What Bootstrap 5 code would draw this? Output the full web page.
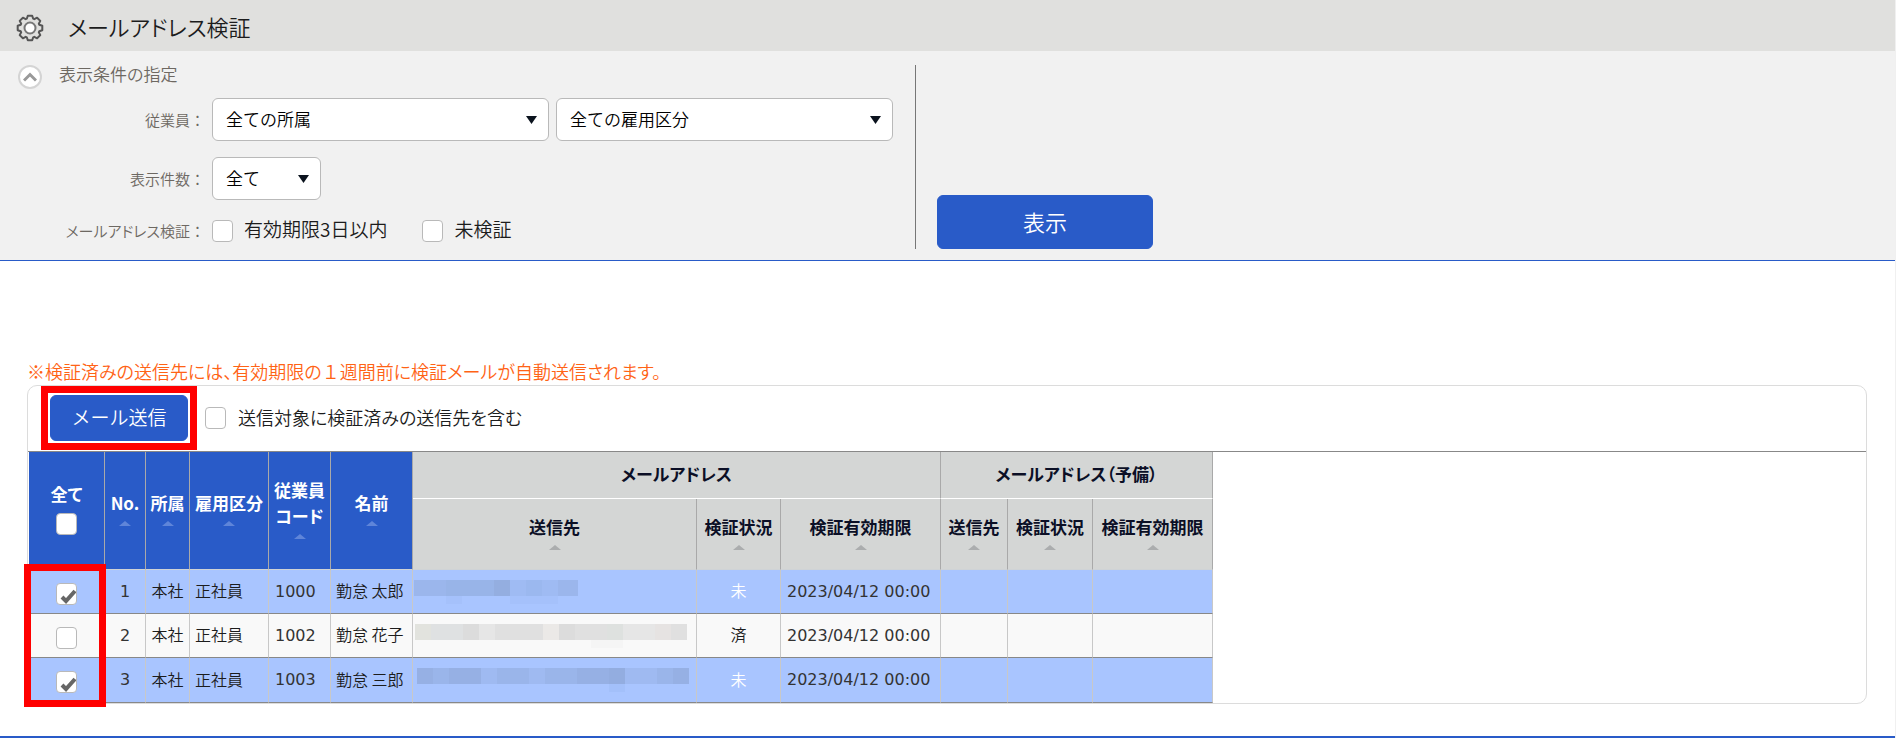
<!DOCTYPE html>
<html lang="ja">
<head>
<meta charset="utf-8">
<meta name="viewport" content="width=device-width, initial-scale=1">
<title>メールアドレス検証</title>
<link href="https://cdn.jsdelivr.net/npm/bootstrap@5.3.0/dist/css/bootstrap.min.css" rel="stylesheet">
<style>
  :root { --brand: #295bc8; --ink: #1c1c1c; }
  body {
    font-family: "Noto Sans CJK JP", "Noto Sans", sans-serif;
    font-feature-settings: "palt";
    font-size: 16px; line-height: 24px; font-weight: 350; color: var(--ink);
    border-right: 1px solid #f0f0f0;
  }
  .title-bar { background: #e0e0de; height: 51px; padding: 4px 16px 0 16px; gap: 24px; }
  .title-bar h1 { font-size: 22px; line-height: 32px; font-weight: 350; padding-bottom: 3px; }
  .filter-panel { background: #f1f1f1; border-bottom: 1px solid var(--brand); padding: 14px 0 11px; }
  .filter-form { flex: 0 1 916px; border-right: 1px solid #777; padding-bottom: 6px; }
  .filter-head { padding-left: 18px; gap: 17px; height: 23px; margin-bottom: 10px; font-size: 17px; line-height: 18px; color: #6d6862; }
  .filter-name { width: 205px; text-align: right; font-size: 15px; color: #6d6862; flex: none; }
  .colon { font-feature-settings: normal; }
  .filter-line { gap: 7px; }
  .tall-line { height: 43px; margin-bottom: 16px; }
  .check-line { height: 24px; margin-top: 19px; }
  .check-line .check-text { padding-bottom: 4px; }
  .check-gap { margin-right: 28px; }
  .toggle-btn { width: 24px; height: 24px; border: 2px solid #d4d4d4; border-radius: 50%; background: #fff; padding: 0; display: flex; align-items: center; justify-content: center; }
  .form-select {
    height: 43px; padding: 0 30px 1px 13px; font-size: 17px; font-weight: 350; color: #000;
    border: 1px solid #b9b9b9; border-radius: 6px;
    background-image: url("data:image/svg+xml,%3Csvg xmlns='http://www.w3.org/2000/svg' viewBox='0 0 11 8'%3E%3Cpath d='M0 0h11L5.500 8z' fill='%230b131e'/%3E%3C/svg%3E");
    background-size: 11px 8px; background-position: right 11px center;
  }
  .select-wide { width: 337px; }
  .select-short { width: 109px; }
  .form-check-input {
    width: 21px; height: 22px; margin: 0; flex: none; float: none;
    border: 1px solid #b9b9b9; border-radius: 3px; background-color: #fff;
  }
  .form-check-input:checked {
    background-color: #fff; border-color: #b9b9b9; background-size: 17px 15px; background-position: 3px 5px;
    background-image: url("data:image/svg+xml,%3Csvg xmlns='http://www.w3.org/2000/svg' viewBox='0 0 17 15'%3E%3Cpath d='M2 8l4 4L15 2' fill='none' stroke='%23666' stroke-width='4'/%3E%3C/svg%3E");
  }
  .check-text { font-size: 19px; line-height: 24px; }
  .btn-brand { --bs-btn-color: #fff; --bs-btn-bg: var(--brand); --bs-btn-border-color: var(--brand); --bs-btn-hover-color: #fff; --bs-btn-hover-bg: #1f4cae; font-size: 19px; font-weight: 350; line-height: 24px; border-radius: 6px; padding: 0 0 3px; }
  .btn-show { width: 216px; height: 54px; margin-left: 21px; font-size: 22px; }
  .btn-send { width: 138px; height: 46px; }
  .results { padding: 98px 28px 0 27px; }
  .notice { color: #ff6315; font-size: 18px; line-height: 24px; padding-bottom: 2px; }
  .result-box { border: 1px solid #dcdcdc; border-radius: 10px; }
  .send-bar { height: 66px; border-bottom: 1px solid #888; padding: 0 0 1px 13px; }
  .send-bar .check-text { font-size: 18px; padding-bottom: 2px; }
  .marked { border: 7px solid #f00; padding: 2px; }
  .grid-wrap { position: relative; padding-left: 1px; }
  .row-mark { position: absolute; left: -4px; top: 112px; width: 82px; height: 143px; border: 7px solid #f00; pointer-events: none; }
  .mail-grid { table-layout: fixed; width: 1184px; border-collapse: separate; border-spacing: 0; }
  .mail-grid > thead > tr > th {
    background: #d4d6d5; color: #0b0f26; box-shadow: none; border: 0 solid #a9a9a9; border-right-width: 1px;
    padding: 0 0 6px; font-size: 17px; line-height: 26px; text-align: center; vertical-align: middle; white-space: nowrap; font-weight: 700;
  }
  .mail-grid > thead > tr > th.main-col { background: var(--brand); color: #fff; border-bottom: 1px solid #cfd3d6; }
  .mail-grid > thead > tr > th.group-col { height: 47px; border-bottom: 1px solid #fff; padding-bottom: 2px; }
  .mail-grid > thead > tr > th.sub-col { height: 71px; border-bottom: 1px solid #cfd3d6; padding-bottom: 4px; }
  .sort { display: block; width: 0; margin: 5px auto 0; border: solid transparent; border-width: 0 6px 5px; border-bottom-color: #abadae; }
  .main-col .sort { border-bottom-color: #5f85d9; }
  .all-label { margin-bottom: 6px; }
  .mail-grid > tbody > tr > td {
    height: 44px; padding: 0 5px 3px; box-shadow: none; background: #f9f9f9; color: var(--ink); vertical-align: middle; white-space: nowrap;
    border: 0 solid #c8c8c8; border-right-width: 1px; border-bottom: 1px solid #888;
  }
  .mail-grid > tbody > tr:last-child > td { height: 45px; }
  .mail-grid > tbody > tr > td.tick { padding-bottom: 0; padding-top: 4px; }
  .mail-grid > tbody > tr.picked > td { background: #a9c5ff; }
  .mail-grid > tbody > tr.picked > td.unverified { color: #fff; }
  .mail-grid > tbody > tr > td.num { font-family: "DejaVu Sans", sans-serif; font-weight: 400; color: #333; padding: 0 6px; }
  .mosaic { display: block; }
  .page-end { border-top: 2px solid var(--brand); }
</style>
<script src="https://cdn.jsdelivr.net/npm/bootstrap@5.3.0/dist/js/bootstrap.bundle.min.js"></script>
</head>
<body class="d-flex flex-column min-vh-100">

<header class="title-bar d-flex align-items-center">
  <svg width="28" height="28" viewBox="-14 -14 28 28" fill="none" stroke="#555" stroke-width="2" stroke-linejoin="round" aria-hidden="true">
    <path d="M-3.200-9.300L-2.200-12.300H2.200L3.200-9.300L4.300-8.800L7.100-10.300L10.300-7.100L8.800-4.300L9.300-3.200L12.300-2.200V2.200L9.300 3.200L8.800 4.300L10.300 7.100L7.100 10.300L4.300 8.800L3.200 9.300L2.200 12.300H-2.200L-3.200 9.300L-4.300 8.800L-7.100 10.300L-10.300 7.100L-8.800 4.300L-9.300 3.200L-12.300 2.200V-2.200L-9.300-3.200L-8.800-4.300L-10.300-7.100L-7.100-10.300L-4.300-8.800Z"/>
    <circle r="5.500" fill="#fff" stroke="#777"/>
  </svg>
  <h1 class="m-0">メールアドレス検証</h1>
</header>

<form class="filter-panel d-flex align-items-end">
  <div class="filter-form">
    <div class="filter-head d-flex align-items-start">
      <button type="button" class="toggle-btn" aria-label="折りたたむ">
        <svg width="14" height="10" viewBox="0 0 14 10" fill="none" stroke="#999" stroke-width="3"><path d="M1 8.500L7 2.500L13 8.500"/></svg>
      </button>
      <span>表示条件の指定</span>
    </div>
    <div class="filter-line tall-line d-flex align-items-center">
      <label class="filter-name" for="dept">従業員<span class="colon">：</span></label>
      <select id="dept" class="form-select select-wide"><option>全ての所属</option></select>
      <select id="kind" class="form-select select-wide" aria-label="雇用区分"><option>全ての雇用区分</option></select>
    </div>
    <div class="filter-line tall-line d-flex align-items-center">
      <label class="filter-name" for="count">表示件数<span class="colon">：</span></label>
      <select id="count" class="form-select select-short"><option>全て</option></select>
    </div>
    <div class="filter-line check-line d-flex align-items-center">
      <span class="filter-name">メールアドレス検証<span class="colon">：</span></span>
      <input class="form-check-input" type="checkbox" id="soon">
      <label class="check-text check-gap ms-1" for="soon">有効期限3日以内</label>
      <input class="form-check-input" type="checkbox" id="yet">
      <label class="check-text ms-1" for="yet">未検証</label>
    </div>
  </div>
  <button type="button" class="btn btn-brand btn-show">表示</button>
</form>

<main class="results">
  <p class="notice m-0">※検証済みの送信先には、有効期限の<span class="colon">１</span>週間前に検証メールが自動送信されます。</p>
  <section class="result-box">
    <div class="send-bar d-flex align-items-center">
      <div class="marked"><button type="button" class="btn btn-brand btn-send d-block">メール送信</button></div>
      <input class="form-check-input ms-2" type="checkbox" id="incl">
      <label class="check-text ms-2 ps-1" for="incl">送信対象に検証済みの送信先を含む</label>
    </div>
    <div class="grid-wrap">
      <table class="table mail-grid m-0">
        <colgroup>
          <col style="width:76px"><col style="width:41px"><col style="width:44px"><col style="width:79px"><col style="width:62px"><col style="width:82px">
          <col style="width:284px"><col style="width:84px"><col style="width:160px"><col style="width:67px"><col style="width:85px"><col style="width:120px">
        </colgroup>
        <thead>
          <tr>
            <th class="main-col" rowspan="2"><label class="all-label d-block" for="all">全て</label><input class="form-check-input d-block mx-auto" type="checkbox" id="all"></th>
            <th class="main-col" rowspan="2">No.<i class="sort"></i></th>
            <th class="main-col" rowspan="2">所属<i class="sort"></i></th>
            <th class="main-col" rowspan="2">雇用区分<i class="sort"></i></th>
            <th class="main-col" rowspan="2">従業員<br>コード<i class="sort"></i></th>
            <th class="main-col" rowspan="2">名前<i class="sort"></i></th>
            <th class="group-col" colspan="3">メールアドレス</th>
            <th class="group-col" colspan="3">メールアドレス（予備）</th>
          </tr>
          <tr>
            <th class="sub-col">送信先<i class="sort"></i></th>
            <th class="sub-col">検証状況<i class="sort"></i></th>
            <th class="sub-col">検証有効期限<i class="sort"></i></th>
            <th class="sub-col">送信先<i class="sort"></i></th>
            <th class="sub-col">検証状況<i class="sort"></i></th>
            <th class="sub-col">検証有効期限<i class="sort"></i></th>
          </tr>
        </thead>
        <tbody>
          <tr class="picked">
            <td class="tick"><input class="form-check-input d-block mx-auto" type="checkbox" checked aria-label="1行目を選択"></td>
            <td class="num text-center">1</td><td class="text-center">本社</td><td>正社員</td><td class="num">1000</td><td>勤怠 太郎</td>
            <td class="p-0"><svg class="mosaic" width="180" height="24" aria-hidden="true">
              <path fill="#9bb6ec" d="M1 0h164v16H1z"/><path fill="#98b4e8" d="M33 0h48v16H33z"/><path fill="#94aee0" d="M81 0h16v16H81z"/><path fill="#9fbbf3" d="M97 0h16v16H97zM129 0h16v16h-16z"/><path fill="#9bb8ef" d="M113 0h16v16h-16z"/><path fill="#a5c1fb" d="M33 16h16v8H33zM97 16h48v8H97z"/>
            </svg></td>
            <td class="text-center unverified">未</td><td class="num">2023/04/12 00:00</td><td></td><td></td><td></td>
          </tr>
          <tr>
            <td class="tick"><input class="form-check-input d-block mx-auto" type="checkbox" aria-label="2行目を選択"></td>
            <td class="num text-center">2</td><td class="text-center">本社</td><td>正社員</td><td class="num">1002</td><td>勤怠 花子</td>
            <td class="p-0"><svg class="mosaic" width="280" height="24" aria-hidden="true">
              <path fill="#e0e0e0" d="M2 0h272v16H2z"/><path fill="#e2e3de" d="M2 0h16v16H2z"/><path fill="#dfe1e2" d="M18 0h32v16H18z"/><path fill="#dcdcdc" d="M50 0h16v16H50zM146 0h16v16h-16z"/><path fill="#e6e6e6" d="M66 0h16v16H66zM210 0h32v16h-32z"/><path fill="#ebe9e7" d="M130 0h16v16h-16z"/><path fill="#dee1df" d="M194 0h16v16h-16z"/><path fill="#e6e3e2" d="M242 0h16v16h-16z"/><path fill="#f5f5f5" d="M178 16h32v8h-32z"/>
            </svg></td>
            <td class="text-center">済</td><td class="num">2023/04/12 00:00</td><td></td><td></td><td></td>
          </tr>
          <tr class="picked">
            <td class="tick"><input class="form-check-input d-block mx-auto" type="checkbox" checked aria-label="3行目を選択"></td>
            <td class="num text-center">3</td><td class="text-center">本社</td><td>正社員</td><td class="num">1003</td><td>勤怠 三郎</td>
            <td class="p-0"><svg class="mosaic" width="280" height="24" aria-hidden="true">
              <path fill="#9ab5ea" d="M4 0h272v16H4z"/><path fill="#96b0e4" d="M4 0h16v16H4zM36 0h32v16H36zM164 0h32v16h-32zM260 0h16v16h-16z"/><path fill="#9fbaf1" d="M68 0h16v16H68zM116 0h16v16h-16zM212 0h32v16h-32z"/><path fill="#93ade0" d="M196 0h16v16h-16z"/><path fill="#a3c0fa" d="M196 16h16v8h-16z"/>
            </svg></td>
            <td class="text-center unverified">未</td><td class="num">2023/04/12 00:00</td><td></td><td></td><td></td>
          </tr>
        </tbody>
      </table>
      <div class="row-mark"></div>
    </div>
  </section>
</main>
<footer class="page-end mt-auto"></footer>
</body>
</html>
